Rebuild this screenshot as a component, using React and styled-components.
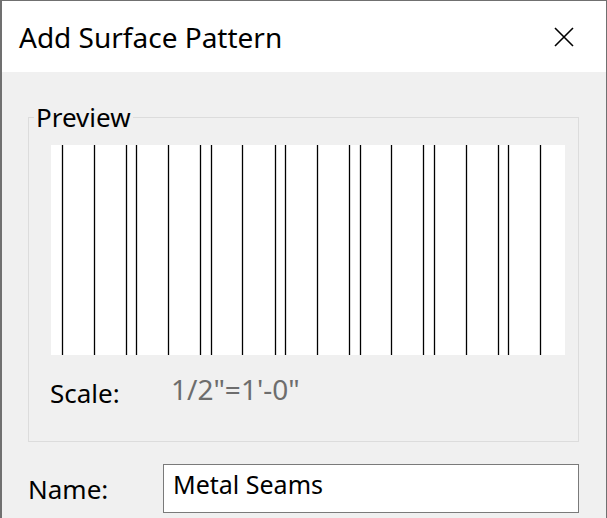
import styled, { createGlobalStyle } from "styled-components";

const GlobalStyle = createGlobalStyle`
  html, body {
    margin: 0;
    padding: 0;
    background: #f0f0f0;
  }
  * {
    box-sizing: border-box;
  }
`;

const Window = styled.div`
  width: 607px;
  height: 518px;
  overflow: hidden;
  background: #f0f0f0;
  border-top: 1px solid #707070;
  border-left: 2px solid #707070;
  border-right: 1px solid #707070;
  font-family: "Noto Sans", "Open Sans", sans-serif;
  color: #000;
`;

const TitleBar = styled.div`
  height: 71px;
  background: #ffffff;
  display: flex;
  align-items: center;
  justify-content: space-between;
  padding: 0 32px 0 17px;
`;

const Title = styled.div`
  font-size: 28px;
  line-height: 36px;
`;

const CloseButton = styled.div`
  width: 20px;
  height: 20px;
  display: flex;
`;

const GroupBox = styled.fieldset`
  margin: 30px 0 0 26px;
  width: 551px;
  padding: 0 0 30px 0;
  border: 1px solid #dcdcdc;
  min-width: 0;
`;

const Legend = styled.legend`
  margin-left: 5px;
  padding: 0 2px;
  font-size: 26px;
  line-height: 30px;
`;

const Preview = styled.svg`
  display: block;
  margin: 13px 12px 0 22px;
  background: #ffffff;
`;

const ScaleRow = styled.div`
  display: flex;
  align-items: flex-start;
  margin: 20px 0 0 21px;
  font-size: 26px;
`;

const Label = styled.span`
  width: ${(p) => p.$width}px;
  line-height: 36px;
`;

const ScaleValue = styled.span`
  color: #6d6d6d;
  font-size: 28px;
  line-height: 29px;
`;

const NameRow = styled.div`
  display: flex;
  align-items: center;
  margin: 22px 0 0 26px;
  font-size: 26px;
`;

const TextInput = styled.input`
  width: 416px;
  height: 49px;
  border: 1px solid #7a7a7a;
  background: #ffffff;
  padding: 0 0 9px 9px;
  font-family: inherit;
  font-size: 25px;
  color: #000;
  outline: none;
`;

const seams = [11, 43, 75, 85, 117, 149, 160, 191, 224, 234, 266, 298, 309, 340, 372, 383, 415, 447, 457, 489];

export default function App() {
  return (
    <>
      <GlobalStyle />
      <Window>
        <TitleBar>
          <Title>Add Surface Pattern</Title>
          <CloseButton>
            <svg width="20" height="20" viewBox="0 0 20 20">
              <path d="M1 1 L19 19 M19 1 L1 19" stroke="#000" strokeWidth="1.6" fill="none" />
            </svg>
          </CloseButton>
        </TitleBar>
        <GroupBox>
          <Legend>Preview</Legend>
          <Preview width="514" height="210" viewBox="0 0 514 210">
            {seams.map((x) => (
              <line key={x} x1={x + 0.5} y1="0" x2={x + 0.5} y2="210" stroke="#000" strokeWidth="1.3" />
            ))}
          </Preview>
          <ScaleRow>
            <Label $width={121}>Scale:</Label>
            <ScaleValue>1/2"=1'-0"</ScaleValue>
          </ScaleRow>
        </GroupBox>
        <NameRow>
          <Label $width={135}>Name:</Label>
          <TextInput readOnly defaultValue="Metal Seams" />
        </NameRow>
      </Window>
    </>
  );
}
